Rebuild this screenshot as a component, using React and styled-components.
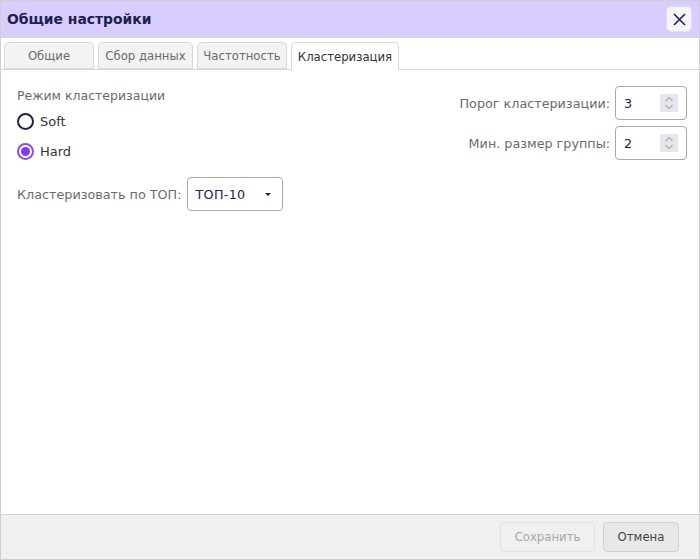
import React from "react";
import styled, { createGlobalStyle } from "styled-components";

const GlobalStyle = createGlobalStyle`
  html, body {
    margin: 0;
    padding: 0;
    background: #fff;
  }
  * {
    box-sizing: border-box;
  }
`;

const Dialog = styled.div`
  width: 700px;
  height: 560px;
  display: flex;
  flex-direction: column;
  border: 1px solid #cfcfcf;
  font-family: "DejaVu Sans", sans-serif;
  font-size: 12.75px;
  color: #6b6b6b;
  background: #fff;
`;

const Header = styled.div`
  height: 37px;
  flex: none;
  display: flex;
  align-items: center;
  justify-content: space-between;
  padding: 0 7px 0 6px;
  background: #d9ccff;
  border-bottom: 1px solid #d4d4d4;
  h1 {
    margin: 0;
    font-size: 13.9px;
    font-weight: 700;
    color: #1e2050;
  }
`;

const CloseButton = styled.button`
  width: 26px;
  height: 26px;
  padding: 0;
  display: flex;
  align-items: center;
  justify-content: center;
  border: 1px solid #e2dcf4;
  border-radius: 5px;
  background: #f5f5f5;
  color: #1e2050;
`;

const TabBar = styled.div`
  height: 32px;
  flex: none;
  display: flex;
  align-items: flex-end;
  gap: 4px;
  padding: 0 3px;
  border-bottom: 1px solid #d8d8d8;
`;

const Tab = styled.div`
  width: ${props => props.width}px;
  height: ${props => (props.active ? 28 : 27)}px;
  margin-bottom: ${props => (props.active ? -1 : 0)}px;
  display: flex;
  align-items: center;
  justify-content: center;
  border: 1px solid #d8d8d8;
  border-bottom: ${props => (props.active ? "none" : "1px solid #d8d8d8")};
  border-radius: 5px 5px 0 0;
  background: ${props => (props.active ? "#fff" : "#f3f3f3")};
  color: ${props => (props.active ? "#333" : "#6b6b6b")};
  font-size: 11.7px;
  white-space: nowrap;
`;

const Content = styled.div`
  flex: 1;
  display: flex;
  justify-content: space-between;
  align-items: flex-start;
  padding: 16px 12px 0 16px;
`;

const LeftColumn = styled.div`
  display: flex;
  flex-direction: column;
`;

const RightColumn = styled.div`
  display: flex;
  flex-direction: column;
  gap: 6px;
`;

const GroupLabel = styled.div`
  height: 18px;
  margin: 1px 0;
  line-height: 18px;
  font-size: 12.5px;
`;

const RadioRow = styled.label`
  height: 30px;
  display: flex;
  align-items: center;
  gap: 6px;
  font-size: 13px;
  color: #333;
`;

const RadioMark = styled.span`
  width: 17px;
  height: 17px;
  display: flex;
  align-items: center;
  justify-content: center;
  border-radius: 50%;
  border: 2px solid ${props => (props.checked ? "#8a4de8" : "#1e2050")};
  &::after {
    content: "";
    display: ${props => (props.checked ? "block" : "none")};
    width: 9px;
    height: 9px;
    border-radius: 50%;
    background: #7c3aed;
  }
`;

const TopRow = styled.div`
  display: flex;
  align-items: center;
  gap: 6px;
  margin-top: 11px;
`;

const Select = styled.div`
  width: 96px;
  height: 34px;
  display: flex;
  align-items: center;
  justify-content: space-between;
  padding: 0 11px 0 7px;
  border: 1px solid #a8a8a8;
  border-radius: 4px;
  color: #1e2050;
  letter-spacing: 0.3px;
`;

const Caret = styled.span`
  width: 0;
  height: 0;
  border-left: 3.5px solid transparent;
  border-right: 3.5px solid transparent;
  border-top: 3.5px solid #1e2050;
`;

const FieldRow = styled.div`
  display: flex;
  align-items: center;
  justify-content: flex-end;
  gap: 5px;
`;

const NumberBox = styled.div`
  width: 72px;
  height: 34px;
  display: flex;
  align-items: center;
  justify-content: space-between;
  padding: 0 8px;
  border: 1px solid #a8a8a8;
  border-radius: 4px;
  color: #1e2050;
`;

const Spinner = styled.span`
  width: 18px;
  height: 18px;
  display: flex;
  align-items: center;
  justify-content: center;
  background: #e6e6ec;
`;

const Footer = styled.div`
  height: 45px;
  flex: none;
  display: flex;
  align-items: center;
  justify-content: flex-end;
  gap: 8px;
  padding: 0 20px 0 0;
  background: #f0f0f0;
  border-top: 1px solid #d4d4d4;
`;

const Button = styled.button`
  height: 30px;
  width: ${props => props.width}px;
  padding: 0;
  border-radius: 4px;
  font-family: inherit;
  font-size: 11.7px;
  border: 1px solid ${props => (props.disabled ? "#e2e2e2" : "#d2d2d2")};
  background: ${props => (props.disabled ? "#f0f0f0" : "#e8e8e8")};
  color: ${props => (props.disabled ? "#a8a8a8" : "#444")};
`;

const tabs = [
  { label: "Общие", width: 90 },
  { label: "Сбор данных", width: 95 },
  { label: "Частотность", width: 90 },
  { label: "Кластеризация", width: 108, active: true },
];

function SpinnerIcon() {
  return (
    <Spinner>
      <svg width="10" height="14" viewBox="0 0 10 14" fill="none" stroke="#85858f" strokeWidth="1">
        <path d="M1.5 5l3.5-3.5 3.5 3.5" />
        <path d="M1.5 9l3.5 3.5 3.5-3.5" />
      </svg>
    </Spinner>
  );
}

export default function App() {
  return (
    <Dialog>
      <GlobalStyle />
      <Header>
        <h1>Общие настройки</h1>
        <CloseButton>
          <svg width="13" height="13" viewBox="0 0 13 13" stroke="currentColor" strokeWidth="1.6" fill="none">
            <path d="M1 1l11 11M12 1L1 12" />
          </svg>
        </CloseButton>
      </Header>
      <TabBar>
        {tabs.map(tab => (
          <Tab key={tab.label} width={tab.width} active={tab.active}>
            {tab.label}
          </Tab>
        ))}
      </TabBar>
      <Content>
        <LeftColumn>
          <GroupLabel>Режим кластеризации</GroupLabel>
          <RadioRow>
            <RadioMark />
            Soft
          </RadioRow>
          <RadioRow>
            <RadioMark checked />
            Hard
          </RadioRow>
          <TopRow>
            Кластеризовать по ТОП:
            <Select>
              ТОП-10
              <Caret />
            </Select>
          </TopRow>
        </LeftColumn>
        <RightColumn>
          <FieldRow>
            Порог кластеризации:
            <NumberBox>
              3
              <SpinnerIcon />
            </NumberBox>
          </FieldRow>
          <FieldRow>
            Мин. размер группы:
            <NumberBox>
              2
              <SpinnerIcon />
            </NumberBox>
          </FieldRow>
        </RightColumn>
      </Content>
      <Footer>
        <Button disabled width={95}>Сохранить</Button>
        <Button width={76}>Отмена</Button>
      </Footer>
    </Dialog>
  );
}
